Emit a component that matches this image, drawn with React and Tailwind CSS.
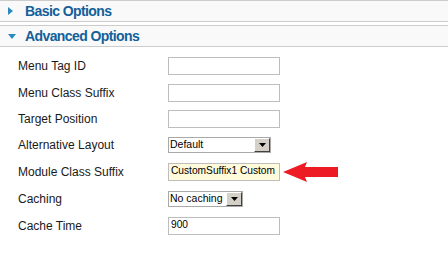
import React from "react";

const rows = [
  { label: "Menu Tag ID", type: "input", value: "", h: "h-[27px]" },
  { label: "Menu Class Suffix", type: "input", value: "", h: "h-[27px]" },
  { label: "Target Position", type: "input", value: "", h: "h-[25px]" },
  { label: "Alternative Layout", type: "select", value: "Default", w: "w-[103px]", h: "h-[27px]" },
  { label: "Module Class Suffix", type: "highlight", value: "CustomSuffix1 Custom", h: "h-[27px]" },
  { label: "Caching", type: "select", value: "No caching", w: "w-[75px]", h: "h-[27px]" },
  { label: "Cache Time", type: "input", value: "900", h: "h-[27px]" },
];

function PanelHeader({ title, open }) {
  return (
    <div className="h-[22px] border-y border-[#cccccc] bg-[#f9f9f9] flex items-center">
      <div className="w-[25px] flex justify-center pr-[1px]">
        {open ? (
          <svg width="8" height="5" viewBox="0 0 8 5">
            <polygon points="0,0 8,0 4,5" fill="#2a8ac0" />
          </svg>
        ) : (
          <svg width="5" height="8" viewBox="0 0 5 8" className="ml-[-3px]">
            <polygon points="0,0 5,4 0,8" fill="#2a8ac0" />
          </svg>
        )}
      </div>
      <span className="text-[14px] font-bold tracking-[-0.6px] text-[#13609a]">{title}</span>
    </div>
  );
}

function Field({ row }) {
  if (row.type === "select") {
    return (
      <div className={`${row.w} h-[16px] border border-[#a9a9a9] bg-white flex items-center`}>
        <span className="flex-1 pl-[1px] text-[10.5px] text-black leading-none">{row.value}</span>
        <div className="w-[16px] h-[14px] bg-[#d4d0c8] border-t border-l border-t-white border-l-white border-b border-r border-b-[#404040] border-r-[#404040] flex items-center justify-center">
          <svg width="7" height="4" viewBox="0 0 7 4">
            <polygon points="0,0 7,0 3.5,4" fill="#000" />
          </svg>
        </div>
      </div>
    );
  }
  const bg = row.type === "highlight" ? "bg-[#fffbdb]" : "bg-white";
  return (
    <div className={`w-[112px] h-[18px] border border-[#bdbdbd] ${bg} flex items-center overflow-hidden`}>
      <span className="pl-[2px] text-[10.2px] text-black whitespace-nowrap leading-none">{row.value}</span>
    </div>
  );
}

export default function App() {
  return (
    <div className="w-[448px] h-[261px] bg-white font-['Liberation_Sans',Arial,sans-serif] overflow-hidden">
      <PanelHeader title="Basic Options" />
      <div className="h-[3px]" />
      <PanelHeader title="Advanced Options" open />

      <div className="pt-[5px]">
        {rows.map((row) => (
          <div key={row.label} className={`${row.h} flex items-center`}>
            <div className="w-[168px] pl-[18px] text-[12px] text-[#1a1a1a]">{row.label}</div>
            <Field row={row} />
            {row.type === "highlight" && (
              <svg width="56" height="20" viewBox="0 0 56 20" className="ml-[3px]">
                <polygon points="0,10 24,0 22,5 55,5 55,15 22,15 24,20" fill="#ed1c24" />
              </svg>
            )}
          </div>
        ))}
      </div>
    </div>
  );
}
